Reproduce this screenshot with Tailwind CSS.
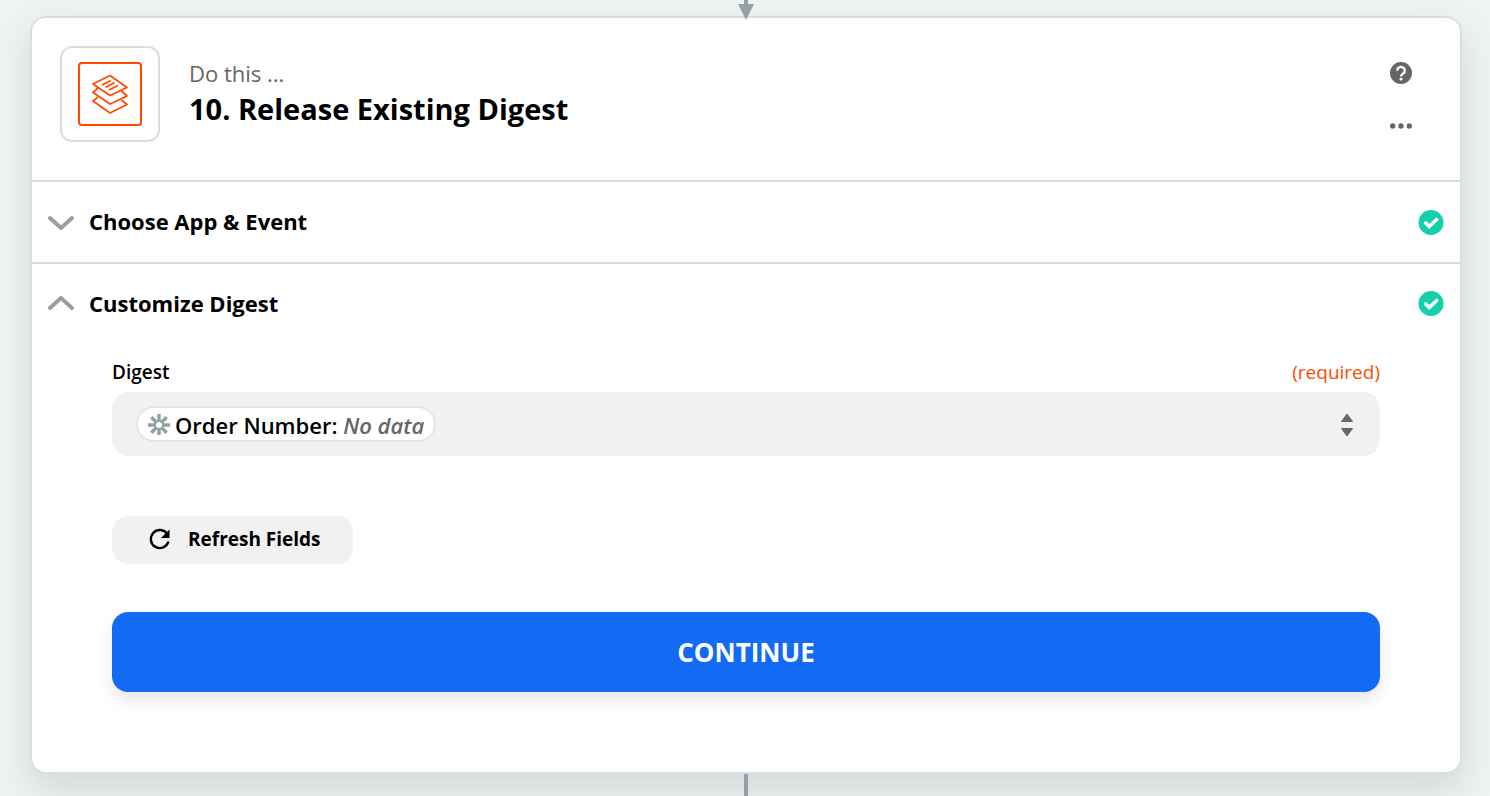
<!DOCTYPE html>
<html lang="en">

<head>
    <meta charset="UTF-8">
    <meta name="viewport" content="width=device-width, initial-scale=1.0">
    <title>Release Existing Digest</title>
    <script src="https://cdn.jsdelivr.net/npm/@tailwindcss/browser@4"></script>
</head>

<body class="bg-[#eef3f4] font-['Open_Sans',sans-serif] text-black min-h-screen">
    <main class="flex flex-col pl-[30px] pr-7">

        <!-- connector from the step above -->
        <div class="h-4 flex justify-center relative z-10">
            <svg class="w-4 h-5 shrink-0" viewBox="0 0 16 20" fill="#95a0a4">
                <path d="M6 0h4v4h6L8 20 0 4h6z" />
            </svg>
        </div>

        <div class="bg-white border-2 border-[#d9dee1] rounded-2xl shadow-[0_16px_40px_rgba(0,0,0,0.12)]">

            <!-- step header -->
            <header class="flex items-start pl-7 pr-12 pt-7 pb-[38px]">
                <div class="w-[100px] h-24 border-2 border-[#dddddd] rounded-xl flex items-center justify-center">
                    <svg class="w-16 h-16" viewBox="0 0 64 64" fill="none" stroke="#ff4a00" stroke-width="2">
                        <rect x="1" y="1" width="62" height="62" rx="3" />
                        <g stroke-width="1.8" stroke-linejoin="round">
                            <path d="M32 13.500 49 25.500 32 33.500 15 22z" />
                            <path d="M20 26 15 30.500 32 42 49 34 43.500 29" />
                            <path d="M20 35 15 39 32 51 49 42.500 43.500 38" />
                            <path d="M24 23 33 18.500M27.500 25.500 36.500 20.500M31 28 40 23.500" />
                        </g>
                    </svg>
                </div>
                <div class="ml-[29px] mt-[11px] flex-1">
                    <p class="text-[22px] leading-8 text-[#666666]">Do this ...</p>
                    <h1 class="text-[29px] leading-10 font-bold">10. Release Existing Digest</h1>
                </div>
                <div class="flex flex-col items-center gap-7 mt-[14px]">
                    <button type="button" aria-label="Help">
                        <svg class="w-[22px] h-6 block" viewBox="0 0 22 24">
                            <circle cx="11" cy="13" r="11" fill="#666666" />
                            <path d="M7.200 10.700a3.800 3.600 0 1 1 6 2.800c-1.400 1-2.200 1.500-2.200 3" fill="none" stroke="#fff" stroke-width="2.300" />
                            <circle cx="11" cy="19.200" r="1.400" fill="#fff" />
                        </svg>
                    </button>
                    <button type="button" aria-label="More options">
                        <svg class="w-[22px] h-6 block" viewBox="0 0 22 24" fill="#666666">
                            <circle cx="2.700" cy="14" r="2.700" />
                            <circle cx="11" cy="14" r="2.700" />
                            <circle cx="19.300" cy="14" r="2.700" />
                        </svg>
                    </button>
                </div>
            </header>

            <section class="border-t-2 border-[#d9dee1]">
                <button type="button" aria-expanded="false" class="w-full h-20 flex items-center px-4 text-left">
                    <svg class="w-[26px] h-4" viewBox="0 0 26 16" fill="none" stroke="#95a0a4" stroke-width="4" stroke-linecap="round">
                        <path d="M2 4 13 14 24 4" />
                    </svg>
                    <span class="ml-[15px] pb-0.5 flex-1 text-[22px] leading-8 font-bold">Choose App &amp; Event</span>
                    <svg class="w-[26px] h-[26px]" viewBox="0 0 26 26" fill="none">
                        <circle cx="13" cy="13.500" r="12.500" fill="#13d0ac" />
                        <path d="M7.700 14 11.200 17.500 18.700 10.500" stroke="#fff" stroke-width="3.600" stroke-linecap="round" />
                    </svg>
                </button>
            </section>

            <section class="border-t-2 border-[#d9dee1]">
                <button type="button" aria-expanded="true" class="w-full h-20 flex items-center px-4 text-left">
                    <svg class="w-[26px] h-4" viewBox="0 0 26 16" fill="none" stroke="#95a0a4" stroke-width="4" stroke-linecap="round">
                        <path d="M2 12 13 2 24 12" />
                    </svg>
                    <span class="ml-[15px] pb-0.5 flex-1 text-[22px] leading-8 font-bold">Customize Digest</span>
                    <svg class="w-[26px] h-[26px]" viewBox="0 0 26 26" fill="none">
                        <circle cx="13" cy="12.500" r="12.500" fill="#13d0ac" />
                        <path d="M7.700 13 11.200 16.500 18.700 9.500" stroke="#fff" stroke-width="3.600" stroke-linecap="round" />
                    </svg>
                </button>

                <form class="px-20 pt-4 pb-20">
                    <div class="flex justify-between text-[19px] leading-6 pb-2">
                        <label for="digest" class="font-semibold">Digest</label>
                        <span class="text-[#ff4a00]">(required)</span>
                    </div>
                    <div class="relative">
                        <select id="digest" class="block appearance-none w-full h-16 px-6 rounded-2xl bg-[#f1f1f1] text-transparent">
                            <option value="order">Order Number</option>
                        </select>
                        <!-- selected value, drawn over the select -->
                        <div class="absolute inset-0 px-6 flex items-center justify-between pointer-events-none">
                            <span class="h-9 flex items-center border-2 border-[#e5e5e5] rounded-full bg-white px-[10px] text-[22px] leading-8">
                                <svg class="w-[22px] h-[22px] mr-[5px]" viewBox="0 0 22 22" fill="none" stroke="#95a0a4" stroke-width="3.400">
                                    <circle cx="11" cy="12" r="4" stroke-width="2" />
                                    <path d="M11 1v7M11 16v7M0 12h7M15 12h7M3.300 4.300l5 5M13.700 14.700l5 5M18.700 4.300l-5 5M8.300 14.700l-5 5" />
                                </svg>
                                <span class="pt-0.5 font-semibold">Order Number: <em class="text-[#666666]">No data</em></span>
                            </span>
                            <svg class="w-[18px] h-6" viewBox="0 0 18 24" fill="#666666" stroke="#666666" stroke-linejoin="round">
                                <path d="M3.500 9.500 9 2l5.500 7.500zM3.500 16.500 9 24l5.500-7.500z" />
                            </svg>
                        </div>
                    </div>

                    <button type="button" class="mt-[60px] h-12 pl-9 pr-8 flex items-center gap-4 rounded-2xl bg-[#f1f1f1] text-[19px] leading-6 font-bold">
                        <svg class="w-6 h-6" viewBox="0 0 24 24" fill="none">
                            <path d="M19.300 6A9 9 0 1 0 20.500 13.500" stroke="#000" stroke-width="2.400" />
                            <path d="M21.500 1.500v8.500H13z" fill="#000" />
                        </svg>
                        <span class="pb-0.5">Refresh Fields</span>
                    </button>

                    <button type="submit" class="mt-12 w-full h-20 rounded-2xl bg-[#136bf5] text-white text-[26px] leading-8 font-bold shadow-[0_8px_16px_rgba(0,0,0,0.1)]">CONTINUE</button>
                </form>
            </section>
        </div>

        <!-- connector to the step below -->
        <div class="h-[22px] w-1 bg-[#95a0a4] self-center relative"></div>
    </main>
</body>

</html>
